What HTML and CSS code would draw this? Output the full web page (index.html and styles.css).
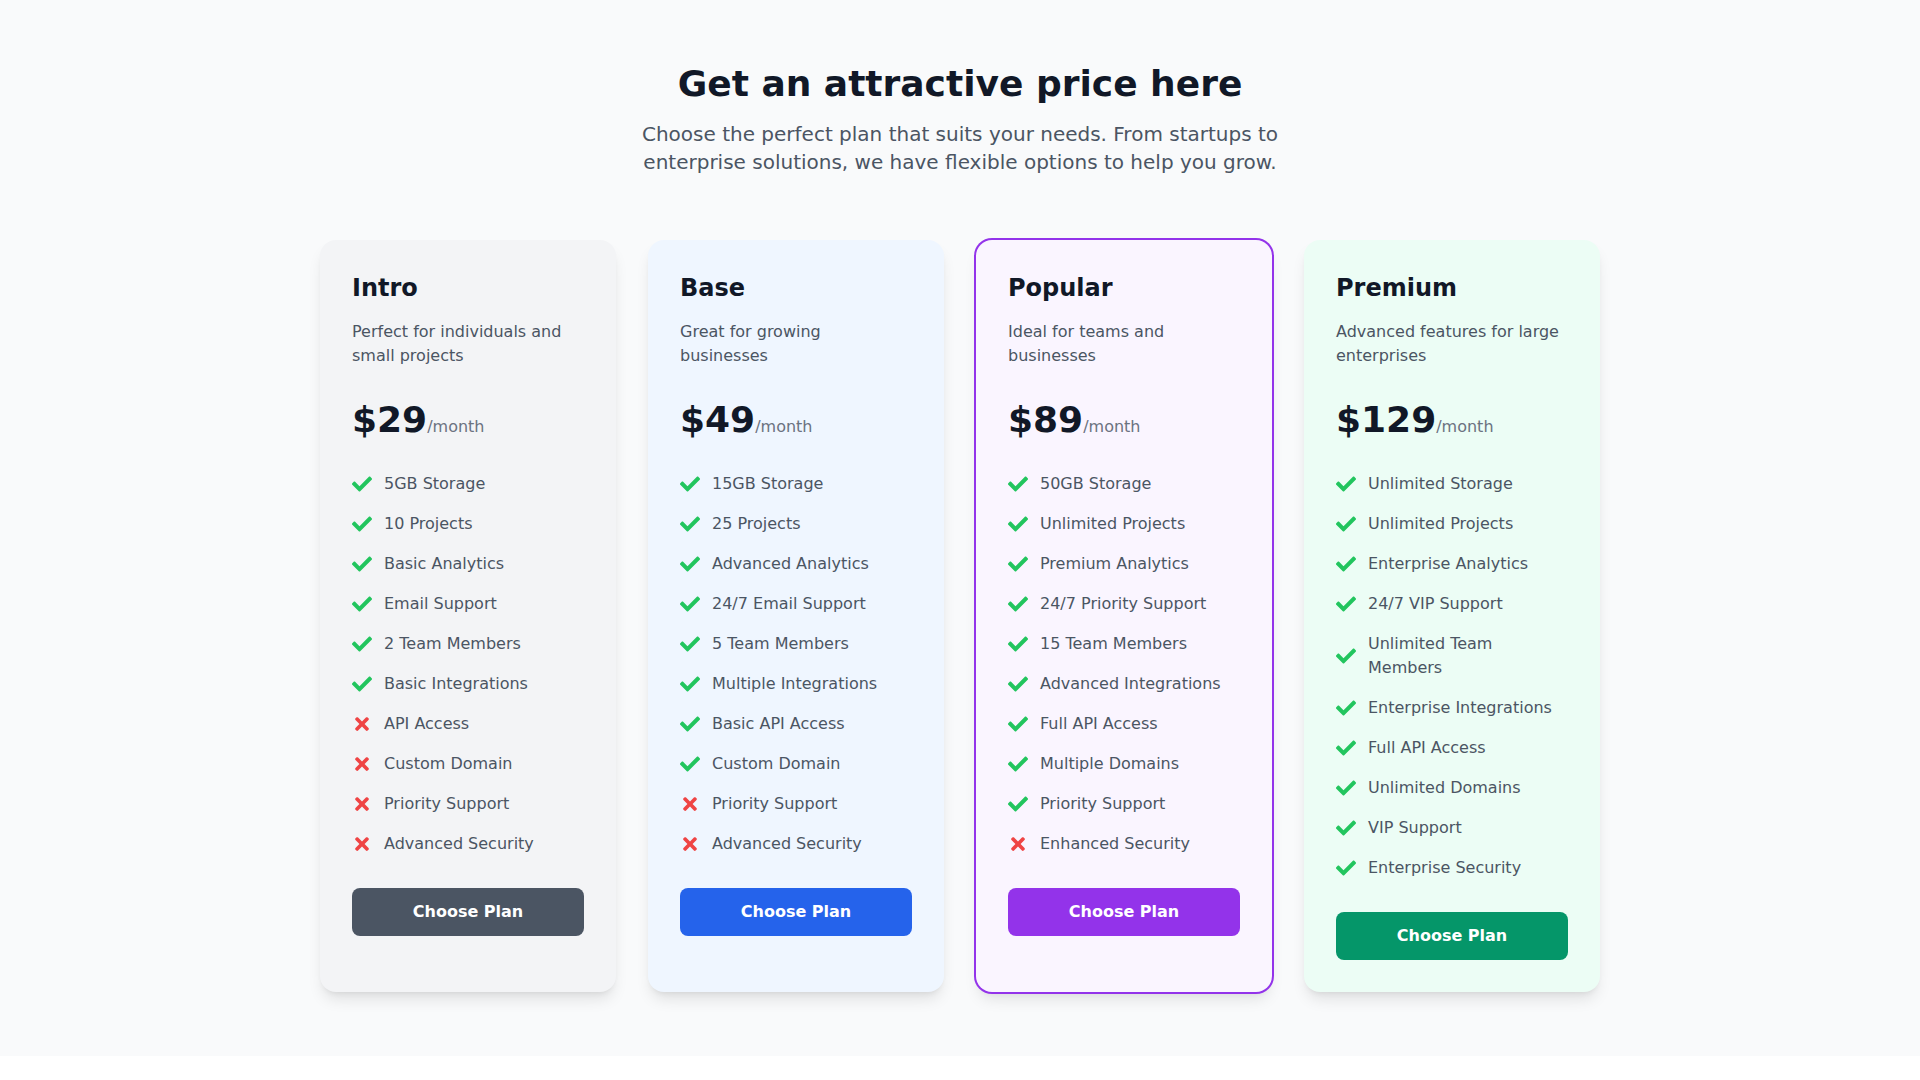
FILE: index.html
```html
<!DOCTYPE html>
<html lang="en">
<head>
<meta charset="utf-8">
<title>Pricing</title>
<link rel="stylesheet" href="styles.css">
</head>
<body>
<svg width="0" height="0" class="defs" aria-hidden="true">
  <defs>
    <symbol id="ico-check" viewBox="0 0 512 512"><path d="M173.898 439.404l-166.4-166.4c-9.997-9.997-9.997-26.206 0-36.204l36.203-36.204c9.997-9.998 26.207-9.998 36.204 0L192 312.69 432.095 72.596c9.997-9.997 26.207-9.997 36.204 0l36.203 36.204c9.997 9.997 9.997 26.206 0 36.204l-294.4 294.401c-9.998 9.997-26.207 9.997-36.204-.001z"/></symbol>
    <symbol id="ico-x" viewBox="-80 0 512 512"><path d="M242.72 256l100.07-100.07c12.28-12.28 12.28-32.19 0-44.48l-22.24-22.24c-12.28-12.28-32.19-12.28-44.48 0L176 189.28 75.930 89.21c-12.28-12.28-32.19-12.28-44.48 0L9.21 111.45c-12.28 12.28-12.28 32.19 0 44.48L109.28 256 9.21 356.07c-12.28 12.280-12.28 32.19 0 44.48l22.24 22.24c12.28 12.28 32.2 12.28 44.480 0L176 322.72l100.07 100.07c12.28 12.28 32.2 12.28 44.48 0l22.24-22.24c12.28-12.28 12.28-32.19 0-44.48L242.72 256z"/></symbol>
  </defs>
</svg>
<section class="pricing">
  <div class="header">
    <h1 class="title">Get an attractive price here</h1>
    <p class="subtitle">Choose the perfect plan that suits your needs. From startups to enterprise solutions, we have flexible options to help you grow.</p>
  </div>
  <div class="grid">
    <div class="card card-intro">
      <h2 class="plan">Intro</h2>
      <p class="desc">Perfect for individuals and small projects</p>
      <div class="price"><span class="amount">$29</span><span class="per">/month</span></div>
      <ul class="features">
        <li><svg class="ico yes"><use href="#ico-check"/></svg><span>5GB Storage</span></li>
        <li><svg class="ico yes"><use href="#ico-check"/></svg><span>10 Projects</span></li>
        <li><svg class="ico yes"><use href="#ico-check"/></svg><span>Basic Analytics</span></li>
        <li><svg class="ico yes"><use href="#ico-check"/></svg><span>Email Support</span></li>
        <li><svg class="ico yes"><use href="#ico-check"/></svg><span>2 Team Members</span></li>
        <li><svg class="ico yes"><use href="#ico-check"/></svg><span>Basic Integrations</span></li>
        <li><svg class="ico no"><use href="#ico-x"/></svg><span>API Access</span></li>
        <li><svg class="ico no"><use href="#ico-x"/></svg><span>Custom Domain</span></li>
        <li><svg class="ico no"><use href="#ico-x"/></svg><span>Priority Support</span></li>
        <li><svg class="ico no"><use href="#ico-x"/></svg><span>Advanced Security</span></li>
      </ul>
      <button class="btn btn-intro">Choose Plan</button>
    </div>
    <div class="card card-base">
      <h2 class="plan">Base</h2>
      <p class="desc">Great for growing businesses</p>
      <div class="price"><span class="amount">$49</span><span class="per">/month</span></div>
      <ul class="features">
        <li><svg class="ico yes"><use href="#ico-check"/></svg><span>15GB Storage</span></li>
        <li><svg class="ico yes"><use href="#ico-check"/></svg><span>25 Projects</span></li>
        <li><svg class="ico yes"><use href="#ico-check"/></svg><span>Advanced Analytics</span></li>
        <li><svg class="ico yes"><use href="#ico-check"/></svg><span>24/7 Email Support</span></li>
        <li><svg class="ico yes"><use href="#ico-check"/></svg><span>5 Team Members</span></li>
        <li><svg class="ico yes"><use href="#ico-check"/></svg><span>Multiple Integrations</span></li>
        <li><svg class="ico yes"><use href="#ico-check"/></svg><span>Basic API Access</span></li>
        <li><svg class="ico yes"><use href="#ico-check"/></svg><span>Custom Domain</span></li>
        <li><svg class="ico no"><use href="#ico-x"/></svg><span>Priority Support</span></li>
        <li><svg class="ico no"><use href="#ico-x"/></svg><span>Advanced Security</span></li>
      </ul>
      <button class="btn btn-base">Choose Plan</button>
    </div>
    <div class="card card-popular">
      <h2 class="plan">Popular</h2>
      <p class="desc">Ideal for teams and businesses</p>
      <div class="price"><span class="amount">$89</span><span class="per">/month</span></div>
      <ul class="features">
        <li><svg class="ico yes"><use href="#ico-check"/></svg><span>50GB Storage</span></li>
        <li><svg class="ico yes"><use href="#ico-check"/></svg><span>Unlimited Projects</span></li>
        <li><svg class="ico yes"><use href="#ico-check"/></svg><span>Premium Analytics</span></li>
        <li><svg class="ico yes"><use href="#ico-check"/></svg><span>24/7 Priority Support</span></li>
        <li><svg class="ico yes"><use href="#ico-check"/></svg><span>15 Team Members</span></li>
        <li><svg class="ico yes"><use href="#ico-check"/></svg><span>Advanced Integrations</span></li>
        <li><svg class="ico yes"><use href="#ico-check"/></svg><span>Full API Access</span></li>
        <li><svg class="ico yes"><use href="#ico-check"/></svg><span>Multiple Domains</span></li>
        <li><svg class="ico yes"><use href="#ico-check"/></svg><span>Priority Support</span></li>
        <li><svg class="ico no"><use href="#ico-x"/></svg><span>Enhanced Security</span></li>
      </ul>
      <button class="btn btn-popular">Choose Plan</button>
    </div>
    <div class="card card-premium">
      <h2 class="plan">Premium</h2>
      <p class="desc">Advanced features for large enterprises</p>
      <div class="price"><span class="amount">$129</span><span class="per">/month</span></div>
      <ul class="features">
        <li><svg class="ico yes"><use href="#ico-check"/></svg><span>Unlimited Storage</span></li>
        <li><svg class="ico yes"><use href="#ico-check"/></svg><span>Unlimited Projects</span></li>
        <li><svg class="ico yes"><use href="#ico-check"/></svg><span>Enterprise Analytics</span></li>
        <li><svg class="ico yes"><use href="#ico-check"/></svg><span>24/7 VIP Support</span></li>
        <li><svg class="ico yes"><use href="#ico-check"/></svg><span>Unlimited Team Members</span></li>
        <li><svg class="ico yes"><use href="#ico-check"/></svg><span>Enterprise Integrations</span></li>
        <li><svg class="ico yes"><use href="#ico-check"/></svg><span>Full API Access</span></li>
        <li><svg class="ico yes"><use href="#ico-check"/></svg><span>Unlimited Domains</span></li>
        <li><svg class="ico yes"><use href="#ico-check"/></svg><span>VIP Support</span></li>
        <li><svg class="ico yes"><use href="#ico-check"/></svg><span>Enterprise Security</span></li>
      </ul>
      <button class="btn btn-premium">Choose Plan</button>
    </div>
  </div>
</section>
</body>
</html>
```
FILE: styles.css
```css
* { box-sizing: border-box; }
html, body { margin: 0; padding: 0; background: #ffffff; }
body {
  font-family: "DejaVu Sans", "Liberation Sans", sans-serif;
  color: #111827;
}
.defs { position: absolute; width: 0; height: 0; overflow: hidden; }

.pricing {
  background: #f9fafb;
  padding: 64px 0;
}
.header { text-align: center; margin-bottom: 64px; }
.title {
  margin: 0 0 16px;
  font-size: 36px;
  line-height: 40px;
  font-weight: 700;
  color: #111827;
}
.subtitle {
  margin: 0 auto;
  max-width: 672px;
  font-size: 20px;
  line-height: 28px;
  color: #4b5563;
}

.grid {
  max-width: 1280px;
  margin: 0 auto;
  display: grid;
  grid-template-columns: repeat(4, 1fr);
  gap: 32px;
  align-items: stretch;
}
.card {
  border-radius: 16px;
  padding: 32px;
  box-shadow: 0 10px 15px -3px rgba(0,0,0,0.1), 0 4px 6px -4px rgba(0,0,0,0.1);
}
.card-intro { background: #f3f4f6; }
.card-base { background: #eff6ff; }
.card-popular {
  background: #faf5ff;
  box-shadow: 0 0 0 2px #9333ea, 0 10px 15px -3px rgba(0,0,0,0.1), 0 4px 6px -4px rgba(0,0,0,0.1);
}
.card-premium { background: #ecfdf5; }

.plan {
  margin: 0 0 16px;
  font-size: 24px;
  line-height: 32px;
  font-weight: 700;
  color: #111827;
}
.desc {
  margin: 0 0 32px;
  font-size: 16px;
  line-height: 24px;
  color: #4b5563;
}
.price {
  display: flex;
  align-items: baseline;
  margin-bottom: 32px;
}
.amount {
  font-size: 36px;
  line-height: 40px;
  font-weight: 700;
  color: #111827;
}
.per {
  font-size: 16px;
  line-height: 24px;
  color: #6b7280;
}

.features {
  list-style: none;
  margin: 0 0 32px;
  padding: 0;
  display: flex;
  flex-direction: column;
  gap: 16px;
}
.features li {
  display: flex;
  align-items: center;
  font-size: 16px;
  line-height: 24px;
  color: #4b5563;
}
.ico {
  flex: 0 0 20px;
  width: 20px;
  height: 20px;
  margin-right: 12px;
}
.ico.yes { fill: #22c55e; }
.ico.no { fill: #ef4444; }

.btn {
  display: block;
  width: 100%;
  border: 0;
  border-radius: 8px;
  padding: 12px 16px;
  font-family: inherit;
  font-size: 16px;
  line-height: 24px;
  font-weight: 700;
  color: #ffffff;
  cursor: pointer;
}
.btn-intro { background: #4b5563; }
.btn-base { background: #2563eb; }
.btn-popular { background: #9333ea; }
.btn-premium { background: #059669; }
```
